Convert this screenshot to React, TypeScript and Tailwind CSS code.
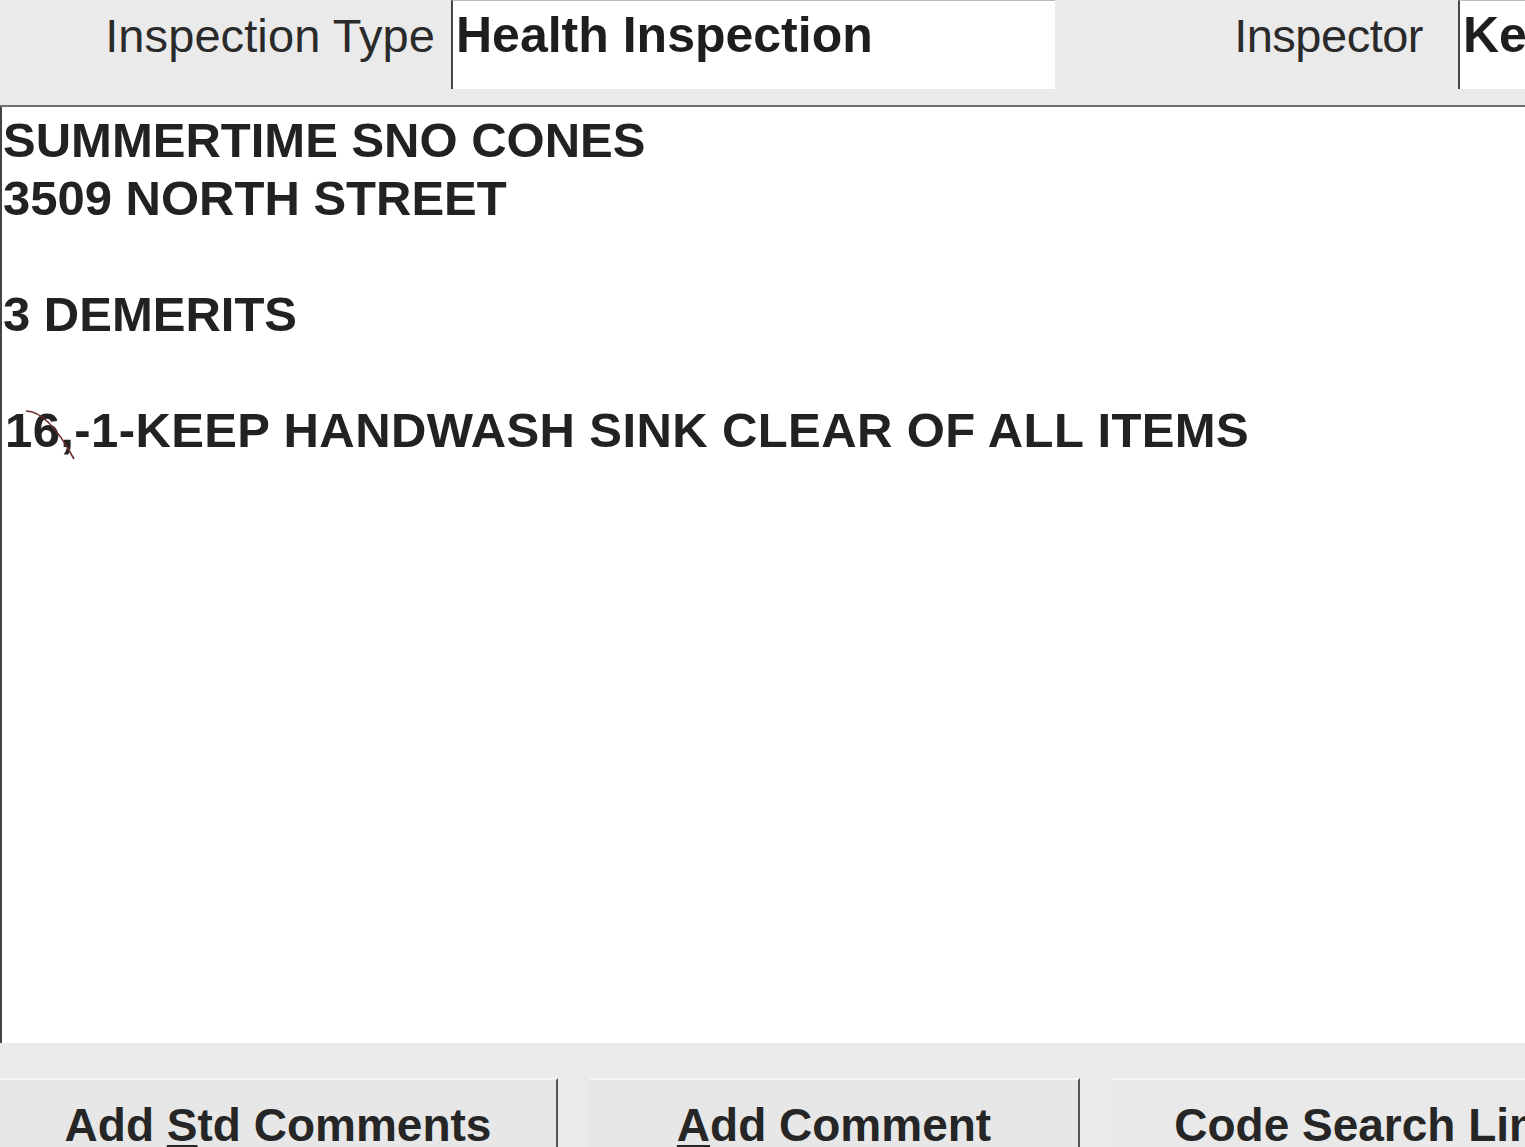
const lines = [
  'SUMMERTIME SNO CONES',
  '3509 NORTH STREET',
  '',
  '3 DEMERITS',
  '',
];

export default function App() {
  return (
    <div className="w-[1525px] h-[1147px] overflow-hidden bg-[#eaeaea] flex flex-col font-['Liberation_Sans',Arial,sans-serif] text-[#222]">
      {/* header fields */}
      <div className="h-[105px] flex shrink-0">
        <div className="w-[435px] pt-[12px] text-right text-[47px] leading-[47px] tracking-[0.1px] text-[#2a2a2a]">
          Inspection Type
        </div>
        <div className="ml-[16px] w-[604px] h-[89px] bg-white border-l-2 border-l-[#444] border-t border-t-[#bbb] pl-[3px] pt-[9px] text-[50px] leading-[50px] font-bold text-[#1e1e1e]">
          Health Inspection
        </div>
        <div className="w-[368px] pt-[12px] text-right text-[47px] leading-[47px] tracking-[-0.5px] text-[#2a2a2a]">
          Inspector
        </div>
        <div className="ml-[35px] flex-1 h-[89px] overflow-hidden bg-white border-l-2 border-l-[#444] border-t border-t-[#bbb] pl-[3px] pt-[9px] text-[50px] leading-[50px] font-bold text-[#1e1e1e] whitespace-nowrap">
          Ke
        </div>
      </div>
      <div className="h-[2px] bg-[#6f6f6f] shrink-0" />

      {/* comments */}
      <div className="relative h-[936px] shrink-0 bg-white border-l-2 border-l-[#444] pl-[1px] pt-[4px] text-[49px] leading-[58px] font-bold whitespace-nowrap">
        {lines.map((l, i) => (
          <div key={i} className="h-[58px]">
            {l}
          </div>
        ))}
        <div className="h-[58px] pl-[2px] tracking-[0.4px]">16,-1-KEEP HANDWASH SINK CLEAR OF ALL ITEMS</div>
        <svg className="absolute left-0 top-0" width="120" height="400">
          <path d="M24 304 Q46 304 72 352" stroke="#6b2a2a" strokeWidth="1.6" fill="none" />
        </svg>
      </div>

      {/* buttons */}
      <div className="h-[35px] shrink-0 bg-[#ebebeb]" />
      <div className="flex flex-1 gap-[32px] text-[46px] leading-[46px] font-bold text-[#262626]">
        <div className="w-[558px] shrink-0 bg-[#e7e7e7] border-t-2 border-t-[#f6f6f6] border-r-2 border-r-[#555] pt-[22px] text-center">
          Add <u className="underline-offset-4">S</u>td Comments
        </div>
        <div className="w-[490px] shrink-0 bg-[#e7e7e7] border-t-2 border-t-[#f6f6f6] border-r-2 border-r-[#555] pt-[22px] text-center">
          <u className="underline-offset-4">A</u>dd Comment
        </div>
        <div className="w-[515px] shrink-0 bg-[#e9e9e9] border-t-2 border-t-[#f6f6f6] border-r-2 border-r-[#555] pt-[22px] text-center whitespace-nowrap">
          Code Search Link
        </div>
      </div>
    </div>
  );
}
